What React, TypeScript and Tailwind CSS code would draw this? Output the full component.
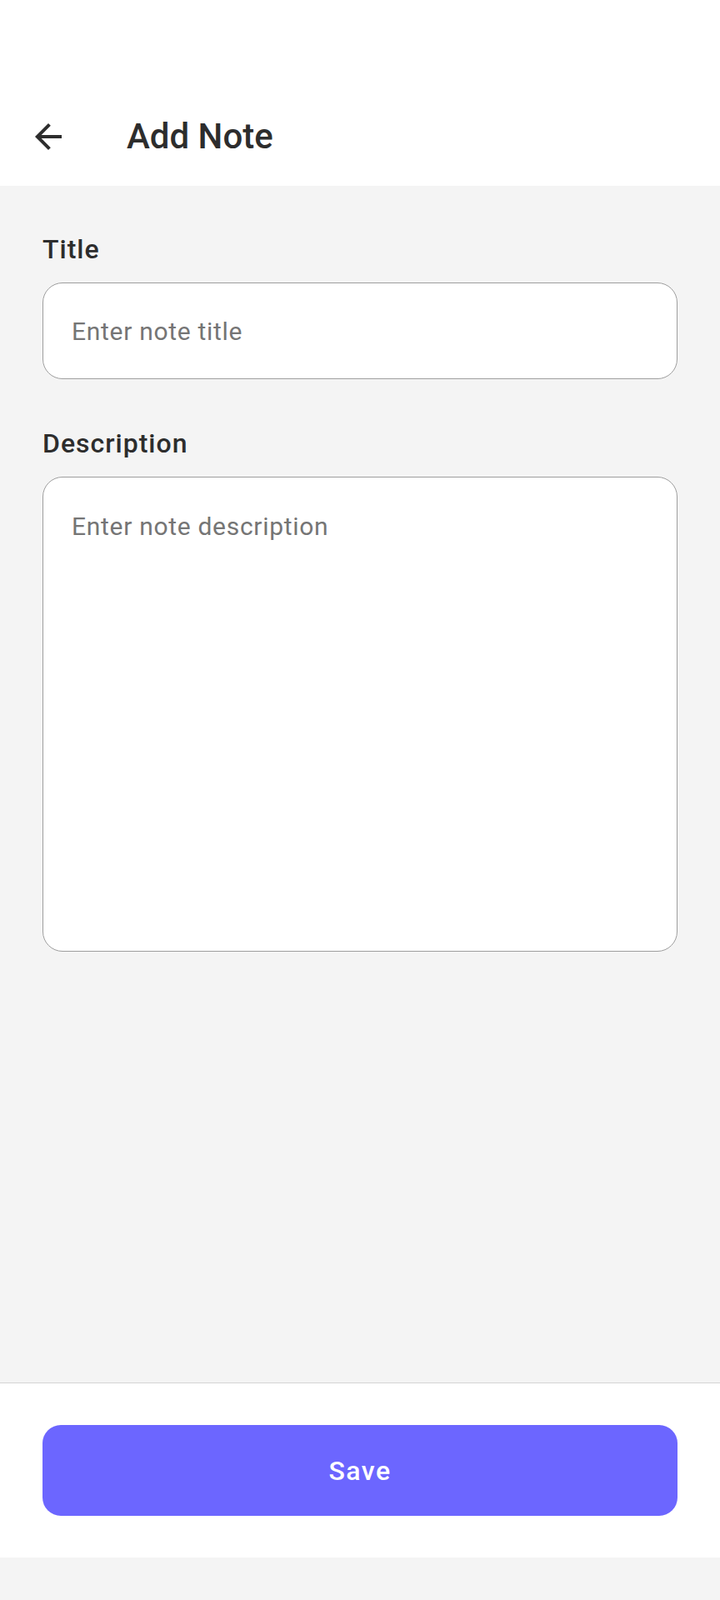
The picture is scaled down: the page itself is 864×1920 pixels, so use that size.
import React from 'react';

function BackArrow() {
  return (
    <svg viewBox="0 0 24 24" className="w-12 h-12" fill="#2d2d2d">
      <path d="M20 11H7.83l5.59-5.59L12 4l-8 8 8 8 1.41-1.41L7.83 13H20v-2z" />
    </svg>
  );
}

export default function App() {
  return (
    <div
      className="h-[1920px] w-full flex flex-col bg-[#f4f4f4]"
      style={{ fontFamily: 'Roboto, "Noto Sans", sans-serif' }}
    >
      <header className="h-[223px] bg-white flex flex-col justify-end">
        <div className="h-[118px] flex items-center">
          <button className="ml-[34px] mr-[70px]">
            <BackArrow />
          </button>
          <h1 className="text-[42px] font-medium text-[#2d2d2d] leading-none">Add Note</h1>
        </div>
      </header>

      <main className="flex-1 px-[51px] pt-[57px]">
        <label className="block text-[32px] leading-[38px] font-medium tracking-[1px] text-[#2d2d2d]">
          Title
        </label>
        <input
          type="text"
          placeholder="Enter note title"
          className="mt-[21px] w-full h-[116px] bg-white border-[1.5px] border-[#9e9e9e] rounded-[24px] px-[34px] text-[30px] tracking-[0.7px] text-[#2d2d2d] placeholder:text-[#757575] outline-none"
        />

        <label className="block mt-[58px] text-[32px] leading-[38px] font-medium tracking-[1px] text-[#2d2d2d]">
          Description
        </label>
        <textarea
          placeholder="Enter note description"
          className="mt-[21px] block w-full h-[570px] resize-none bg-white border-[1.5px] border-[#9e9e9e] rounded-[24px] px-[34px] pt-[41px] text-[30px] leading-[36px] tracking-[0.7px] text-[#2d2d2d] placeholder:text-[#757575] outline-none"
        />
      </main>

      <footer className="h-[210px] bg-white border-t border-[#d4d4d4] px-[51px] pt-[50px]">
        <button className="w-full h-[109px] rounded-[22px] bg-[#6c66ff] text-white text-[32px] font-medium tracking-[1.5px]">
          Save
        </button>
      </footer>

      <div className="h-[51px] bg-[#f4f4f4]" />
    </div>
  );
}
